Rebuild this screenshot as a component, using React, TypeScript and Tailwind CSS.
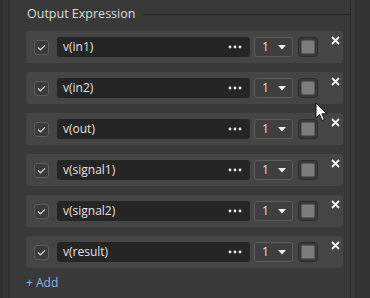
import React from "react";

const rows = ["v(in1)", "v(in2)", "v(out)", "v(signal1)", "v(signal2)", "v(result)"];

function Row({ label }: { label: string }) {
  return (
    <div className="relative flex h-[32px] w-[317px] items-center rounded-[3px] bg-[#454545] pl-[8px]">
      <div className="flex h-[15px] w-[15px] items-center justify-center rounded-[3px] border border-[#5e5e5e] bg-[#3b3b3b]">
        <svg width="9" height="7" viewBox="0 0 9 7">
          <path d="M1 3.6 L3.4 5.8 L8 1.4" fill="none" stroke="#cfcfcf" strokeWidth="1.3" />
        </svg>
      </div>
      <div className="ml-[8px] flex h-[20px] w-[193px] items-center justify-between rounded-[3px] bg-[#252525] pl-[6px] pr-[8px] text-[12px] text-[#e0e0e0]">
        <span className="leading-none">{label}</span>
        <svg width="14" height="4" viewBox="0 0 14 4">
          <circle cx="2" cy="2" r="1.4" fill="#e6e6e6" />
          <circle cx="7" cy="2" r="1.4" fill="#e6e6e6" />
          <circle cx="12" cy="2" r="1.4" fill="#e6e6e6" />
        </svg>
      </div>
      <div className="ml-[4px] flex h-[20px] w-[39px] items-center justify-between rounded-[3px] border border-[#5c5c5c] bg-[#3f3f3f] pl-[7px] pr-[6px] text-[12px] text-[#e0e0e0]">
        <span className="leading-none">1</span>
        <svg width="8" height="5" viewBox="0 0 8 5">
          <path d="M0 0 L8 0 L4 4.5 Z" fill="#f0f0f0" />
        </svg>
      </div>
      <div className="ml-[5px] flex h-[20px] w-[20px] items-center justify-center rounded-[4px] border border-[#2a2a2a] bg-[#3a3a3a]">
        <div className="h-[14px] w-[14px] rounded-[2px] border border-[#5a5a5a] bg-[#7d7d7d]" />
      </div>
      <svg className="absolute right-[3px] top-[5px]" width="9" height="9" viewBox="0 0 9 9">
        <path d="M1 1 L8 8 M8 1 L1 8" stroke="#f2f2f2" strokeWidth="1.8" />
      </svg>
    </div>
  );
}

export default function App() {
  return (
    <div
      className="relative flex h-[298px] w-[370px] overflow-hidden bg-[#383838]"
      style={{ fontFamily: '"Open Sans", "Noto Sans", sans-serif' }}
    >
      <div className="flex h-full w-[10px]">
        <div className="h-full w-[3px] bg-[#2e2e2e]" />
        <div className="h-full w-[5px] bg-[#353535]" />
        <div className="h-full w-[2px] bg-[#303030]" />
      </div>
      <div className="flex h-full w-[341px] flex-col border-r border-[#2a2a2a] bg-[#393939]">
        <div className="flex h-[28px] items-center pl-[17px]">
          <span className="text-[12.5px] leading-none text-[#dcdcdc]">Output Expression</span>
          <div className="ml-[8px] h-px flex-1 bg-[#232323]" />
        </div>
        <div className="flex flex-col gap-[9px] pl-[16px] pt-[3px]">
          {rows.map((r) => (
            <Row key={r} label={r} />
          ))}
        </div>
        <div className="pl-[16px] pt-[9px] text-[12px] leading-none text-[#8fb4e0]">+ Add</div>
      </div>
      <div className="flex h-full flex-1">
        <div className="h-full w-[4px] bg-[#3a3a3a]" />
        <div className="h-full flex-1 bg-[#333333]" />
      </div>
      <svg className="absolute left-[315px] top-[102px]" width="14" height="21" viewBox="0 0 14 21">
        <path d="M1 1 L1 16 L4.5 12.5 L7 18.5 L9.3 17.5 L6.9 11.8 L11.8 11.8 Z" fill="#ffffff" stroke="#111" strokeWidth="1" />
      </svg>
    </div>
  );
}
